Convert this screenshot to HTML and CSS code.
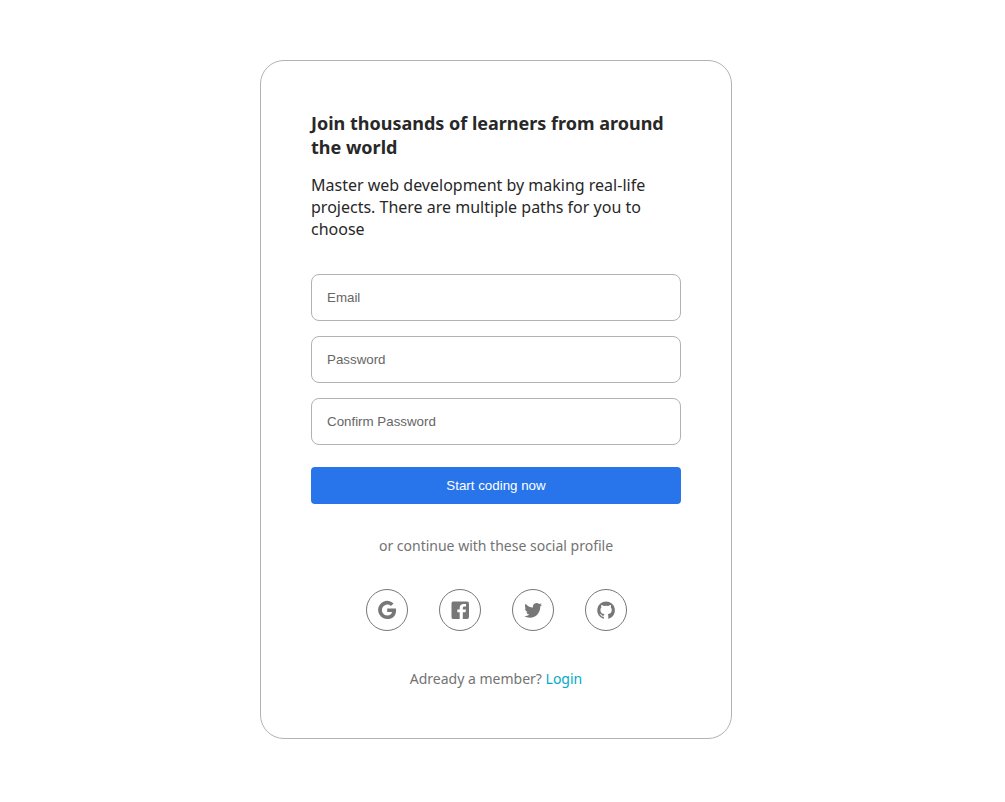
FILE: index.html
```html
<!DOCTYPE html>
<html lang="en">
<head>
<meta charset="utf-8">
<meta name="viewport" content="width=device-width, initial-scale=1">
<title>Join thousands of learners</title>
<link rel="stylesheet" href="styles.css">
</head>
<body>
<main class="card">
  <h1 class="title">Join thousands of learners from around the world</h1>
  <p class="intro">Master web development by making real-life projects. There are multiple paths for you to choose</p>
  <form class="form">
    <input class="field" type="email" placeholder="Email" aria-label="Email">
    <input class="field" type="password" placeholder="Password" aria-label="Password">
    <input class="field" type="password" placeholder="Confirm Password" aria-label="Confirm Password">
    <button class="submit" type="submit">Start coding now</button>
  </form>
  <p class="note">or continue with these social profile</p>
  <div class="social">
    <button class="social-button" type="button" aria-label="Google">
      <svg viewBox="0 0 40 40"><path d="M20.200 18.400H28.900C29.100 19.200 29.100 19.800 29.100 20.400C29.100 25.600 25.600 29 20.400 29A9.100 9.100 0 1 1 26.600 13.400L23.900 16A5.400 5.400 0 1 0 20.400 25.400C22.800 25.400 24.600 24.100 25.100 22H20.200Z"/></svg>
    </button>
    <button class="social-button" type="button" aria-label="Facebook">
      <svg viewBox="0 0 40 40"><path d="M13 11.500H27Q29 11.500 29 13.500V27Q29 29 27 29H22.800V22.300H25.500L26 19.400H22.800V17.900Q22.800 16.600 24.100 16.600H26V13.900H23.800Q19.700 13.900 19.700 17.700V19.400H17.300V22.300H19.700V29H13Q11.500 29 11.500 27V13.500Q11.500 11.500 13 11.500Z"/></svg>
    </button>
    <button class="social-button" type="button" aria-label="Twitter">
      <svg viewBox="0 0 40 40"><path transform="translate(11.300 11.300) scale(.74)" d="M23.950 4.570a10 10 0 0 1-2.820.77 4.960 4.960 0 0 0 2.160-2.720c-.95.550-2 .950-3.130 1.180a4.920 4.920 0 0 0-8.380 4.480C7.690 8.100 4.070 6.130 1.640 3.160a4.820 4.820 0 0 0-.67 2.470c0 1.710.2 3.210 1.400 4.300l-1.400-.4c.1 2.400 1 4 3.400 5l-1.500.2a4.940 4.940 0 0 0 4 3.200A9.870 9.870 0 0 1 0 20.300a14 14 0 0 0 7.550 2c9.050 0 14-7.700 14-14.500 0-.21 0-.42-.02-.63A9.940 9.940 0 0 0 24 4.590Z"/></svg>
    </button>
    <button class="social-button" type="button" aria-label="GitHub">
      <svg viewBox="0 0 40 40"><path transform="translate(11.200 11.200) scale(.74)" d="M12 .3a12 12 0 0 0-3.800 23.380c.6.120.830-.26.830-.57v-2.230c-3.340.730-4.040-1.420-4.040-1.420-.55-1.380-1.330-1.750-1.330-1.750-1.090-.74.080-.73.080-.73 1.200.080 1.840 1.240 1.840 1.240 1.070 1.830 2.810 1.300 3.490 1 .1-.78.420-1.310.760-1.610-2.660-.3-5.470-1.330-5.470-5.930 0-1.310.470-2.380 1.240-3.220-.14-.3-.54-1.520.1-3.180 0 0 1-.32 3.300 1.230a11.500 11.500 0 0 1 6 0c2.280-1.550 3.290-1.230 3.290-1.230.64 1.660.24 2.880.12 3.180a4.650 4.650 0 0 1 1.230 3.220c0 4.610-2.810 5.630-5.480 5.920.42.360.810 1.100.810 2.220v3.290c0 .32.190.69.800.57A12 12 0 0 0 12 .3"/></svg>
    </button>
  </div>
  <p class="member">Adready a member? <a class="login" href="#">Login</a></p>
</main>
</body>
</html>
```
FILE: styles.css
```css
* { box-sizing: border-box; }
body {
  margin: 0;
  padding: 60px 29px 60px 16px;
  background: #fff;
  color: #282828;
  font-family: "Noto Sans", sans-serif;
}
.card {
  max-width: 472px;
  margin: 0 auto;
  padding: 50px 50px 49px;
  border: 1px solid #b2b2b2;
  border-radius: 24px;
}
.title { margin: 0; font-size: 18px; line-height: 24px; font-weight: 700; }
.intro { margin: 15px 0 34px; font-size: 16px; line-height: 22px; }
.form { display: flex; flex-direction: column; gap: 15px; }
.field {
  width: 100%;
  height: 47px;
  padding: 0 15px;
  border: 1px solid #b2b2b2;
  border-radius: 8px;
  background: #fff;
  font-family: "Liberation Sans", sans-serif;
}
.field::placeholder { color: #666; }
.submit {
  height: 37px;
  margin-top: 7px;
  border: 0;
  border-radius: 4px;
  background: #2875eb;
  color: #fff;
  font-family: "Liberation Sans", sans-serif;
}
.note, .member { margin: 0; color: #737373; font-size: 14px; line-height: 20px; text-align: center; }
.note { margin-top: 32px; }
.social { display: flex; justify-content: center; gap: 31px; margin: 33px 0 38px; }
.social-button {
  width: 42px;
  height: 42px;
  padding: 0;
  border: 1px solid #777;
  border-radius: 50%;
  background: #fff;
}
.social-button svg { display: block; width: 40px; height: 40px; fill: #777; }
.login { color: #00abc8; text-decoration: none; }
```
